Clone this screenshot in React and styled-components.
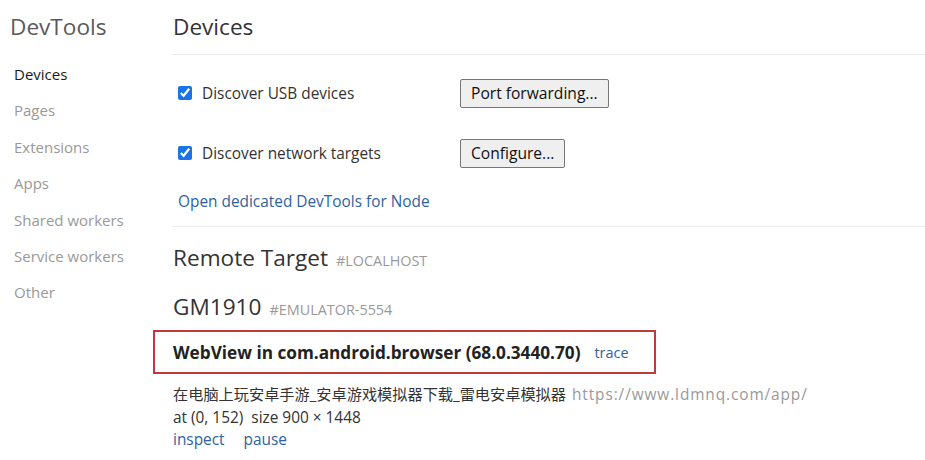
import React from "react";
import styled, { createGlobalStyle } from "styled-components";

const GlobalStyle = createGlobalStyle`
  html, body {
    margin: 0;
    padding: 0;
    background: #fff;
  }
  body {
    font-family: "Open Sans", "Noto Sans CJK SC", sans-serif;
    color: #303942;
  }
`;

const Page = styled.div`
  display: flex;
  width: 925px;
  height: 460px;
  overflow: hidden;
`;

const Sidebar = styled.nav`
  width: 160px;
  flex-shrink: 0;
  padding-top: 11px;
`;

const Brand = styled.h1`
  margin: 0 0 13px 10px;
  height: 32px;
  line-height: 32px;
  font-size: 22.6px;
  font-weight: 400;
  color: #5a5a5a;
`;

const NavItem = styled.div`
  height: 36.4px;
  line-height: 36.4px;
  padding-left: 14px;
  font-size: 15px;
  color: ${(p) => (p.$active ? "#1a1a1a" : "#999")};
`;

const Main = styled.main`
  flex: 1;
  padding-left: 12px;
`;

const Section = styled.section`
  border-bottom: ${(p) => (p.$divider ? "1px solid #ebebeb" : "none")};
  padding-left: 1px;
`;

const HeaderBar = styled.div`
  height: 54px;
  border-bottom: 1px solid #ebebeb;
  padding-left: 1px;
  display: flex;
  align-items: center;
`;

const Title = styled.h2`
  margin: 0;
  font-size: 22.6px;
  font-weight: 400;
  color: #333;
  display: flex;
  align-items: baseline;
  gap: 8px;
  height: 30px;
  line-height: 30px;
`;

const Tag = styled.span`
  font-size: 14.4px;
  color: #999;
`;

const Options = styled.div`
  padding: 23px 0 13px 5px;
  display: flex;
  flex-direction: column;
`;

const OptionRow = styled.div`
  display: flex;
  align-items: center;
  height: 30px;
  margin-bottom: ${(p) => p.$mb || "0"};
`;

const Check = styled.input`
  width: 14px;
  height: 14px;
  margin: 0 10px 0 0;
  accent-color: #1a73e8;
`;

const Label = styled.label`
  width: 258px;
  font-size: 15.4px;
  color: #333;
`;

const Button = styled.button`
  height: 29px;
  padding: 0 10px;
  font-family: inherit;
  font-size: 15.6px;
  color: #111;
  background: #efefef;
  border: 1px solid #767676;
  border-radius: 2px;
`;

const Link = styled.a`
  font-size: ${(p) => p.$size || "15.4px"};
  color: #2f62a3;
  text-decoration: none;
  cursor: pointer;
`;

const NodeLink = styled.div`
  height: 24px;
  line-height: 24px;
  margin-top: 21px;
`;

const Remote = styled.div`
  padding-top: 16px;
  padding-left: 1px;
  display: flex;
  flex-direction: column;
  gap: 19px;
`;

const Highlight = styled.div`
  margin-top: -11px;
  margin-left: -20px;
  width: 503px;
  height: 44px;
  box-sizing: border-box;
  border: 2px solid #c1393d;
  padding-left: 18px;
  display: flex;
  align-items: center;
  gap: 14px;
`;

const TargetName = styled.span`
  font-size: 17.2px;
  font-weight: 700;
  color: #222;
`;

const Details = styled.div`
  margin-top: -10px;
  display: flex;
  flex-direction: column;
  font-size: 15.4px;
  line-height: 22.5px;
  color: #333;
`;

const PageTitle = styled.span`
  font-size: 15.2px;
`;

const Url = styled.span`
  color: #999;
  margin-left: 6px;
  letter-spacing: 0.9px;
`;

const Actions = styled.div`
  display: flex;
  gap: 19px;
`;

export default function App() {
  const nav = [
    "Devices",
    "Pages",
    "Extensions",
    "Apps",
    "Shared workers",
    "Service workers",
    "Other",
  ];

  return (
    <>
      <GlobalStyle />
      <Page>
        <Sidebar>
          <Brand>DevTools</Brand>
          {nav.map((n, i) => (
            <NavItem key={n} $active={i === 0}>
              {n}
            </NavItem>
          ))}
        </Sidebar>
        <Main>
          <HeaderBar>
            <Title>Devices</Title>
          </HeaderBar>
          <Section $divider>
            <Options>
              <OptionRow $mb="30px">
                <Check type="checkbox" defaultChecked />
                <Label>Discover USB devices</Label>
                <Button>Port forwarding...</Button>
              </OptionRow>
              <OptionRow>
                <Check type="checkbox" defaultChecked />
                <Label>Discover network targets</Label>
                <Button>Configure...</Button>
              </OptionRow>
              <NodeLink>
                <Link>Open dedicated DevTools for Node</Link>
              </NodeLink>
            </Options>
          </Section>
          <Remote>
            <Title>
              Remote Target <Tag>#LOCALHOST</Tag>
            </Title>
            <Title>
              GM1910 <Tag>#EMULATOR-5554</Tag>
            </Title>
            <Highlight>
              <TargetName>WebView in com.android.browser (68.0.3440.70)</TargetName>
              <Link $size="14.4px">trace</Link>
            </Highlight>
            <Details>
              <div>
                <PageTitle>在电脑上玩安卓手游_安卓游戏模拟器下载_雷电安卓模拟器</PageTitle>
                <Url>https://www.ldmnq.com/app/</Url>
              </div>
              <div>at (0, 152)&nbsp; size 900 × 1448</div>
              <Actions>
                <Link>inspect</Link>
                <Link>pause</Link>
              </Actions>
            </Details>
          </Remote>
        </Main>
      </Page>
    </>
  );
}
